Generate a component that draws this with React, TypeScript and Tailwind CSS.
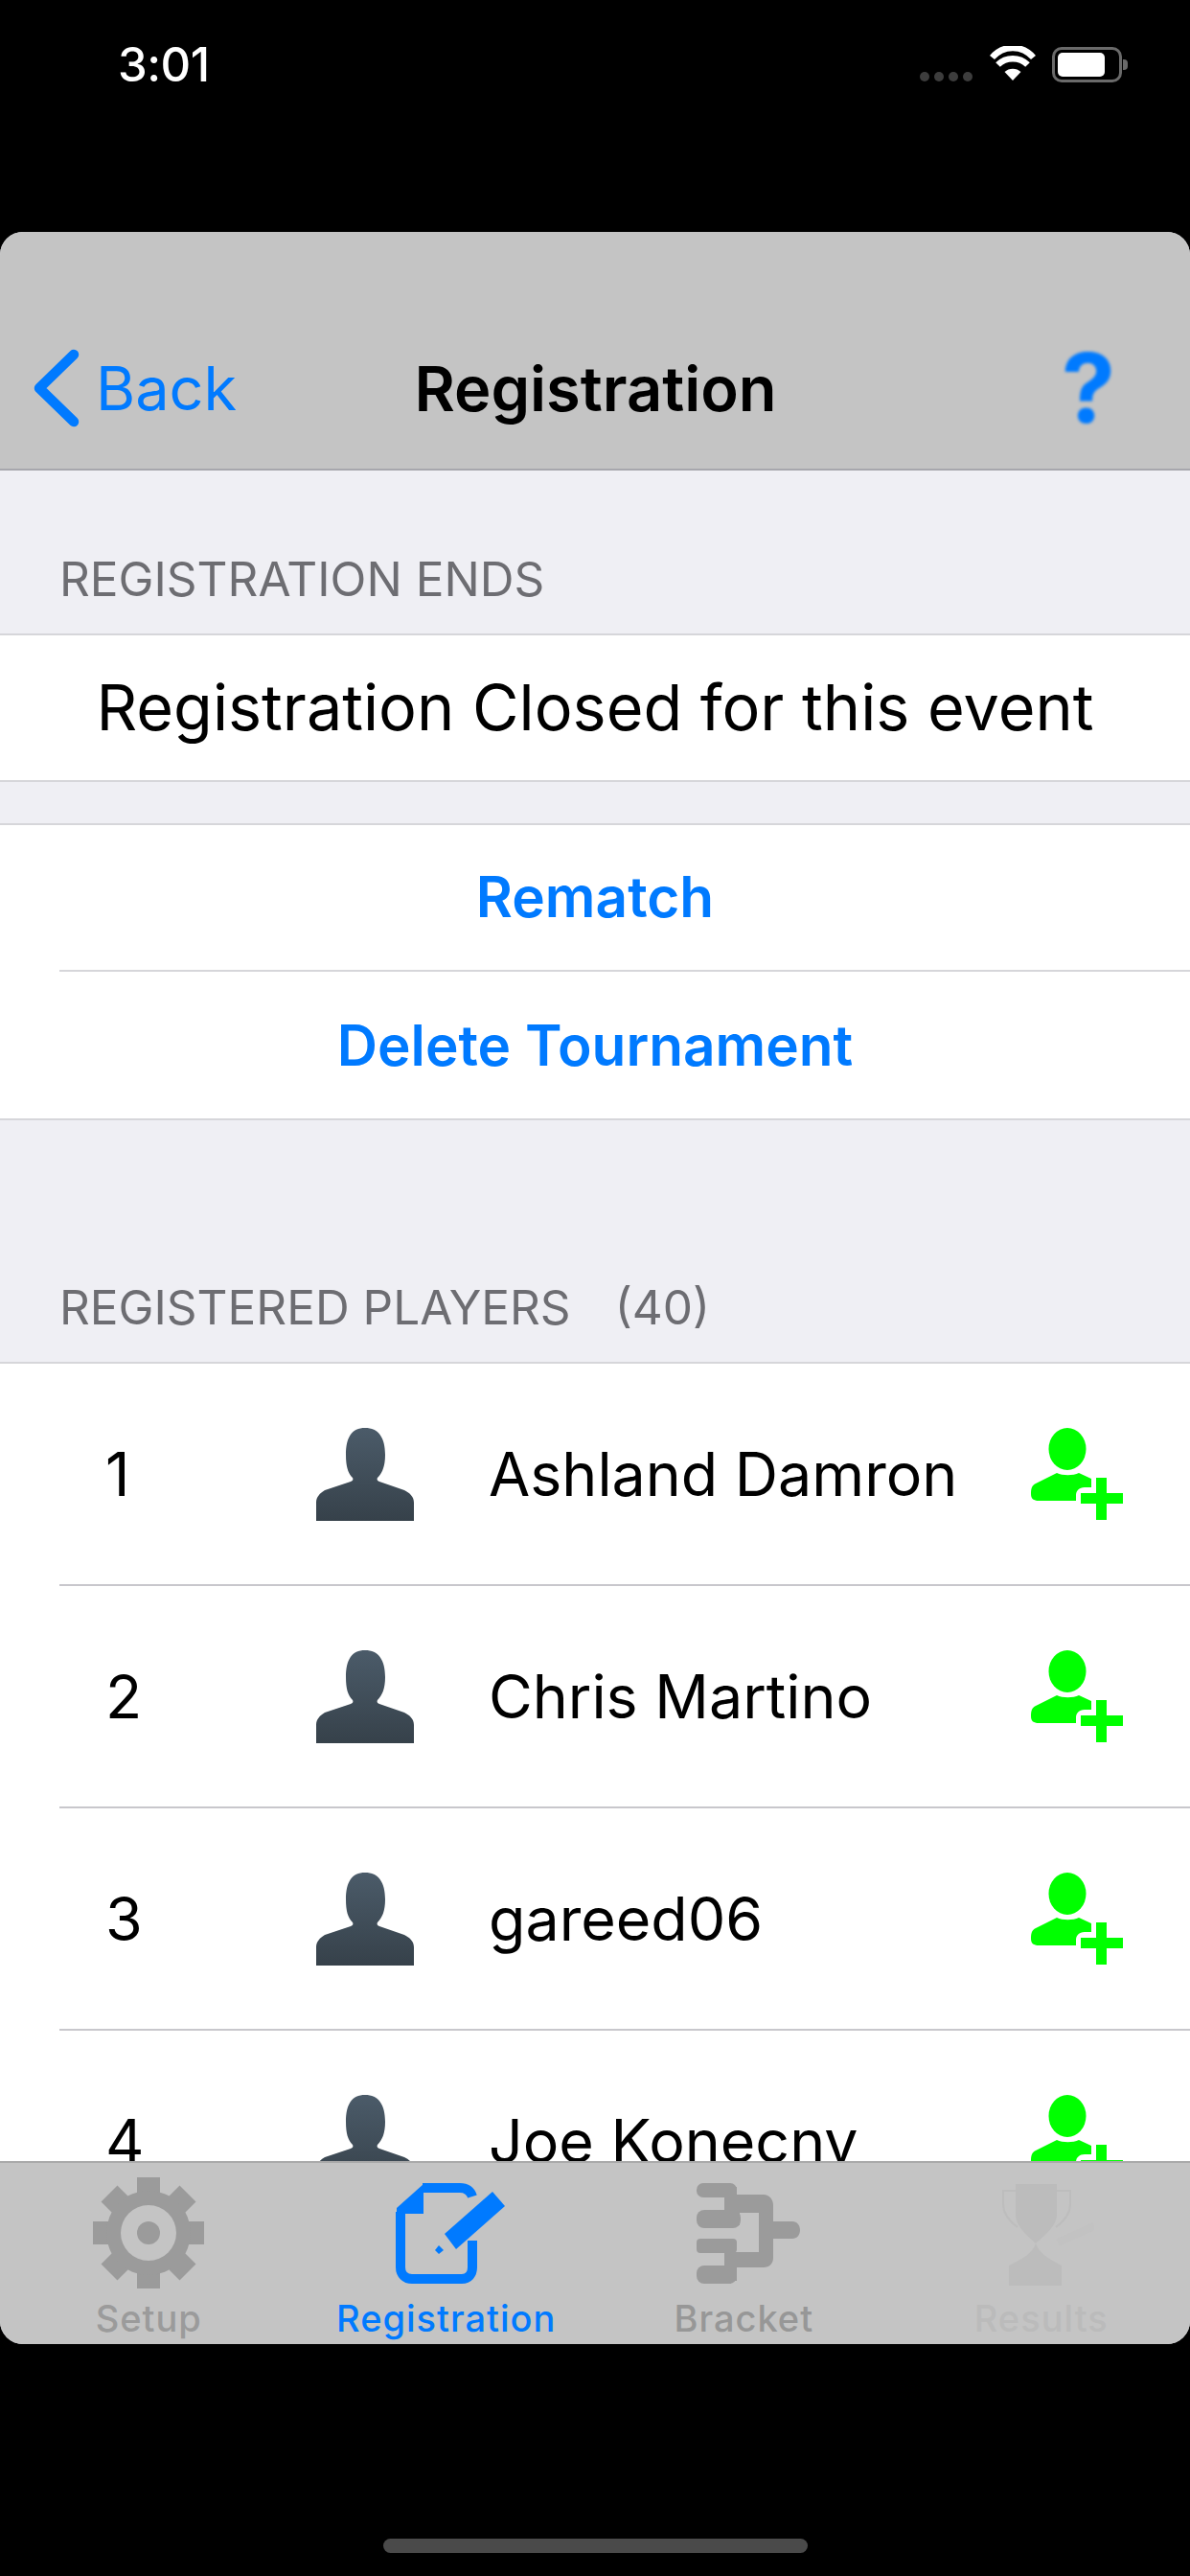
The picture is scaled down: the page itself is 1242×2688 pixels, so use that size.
import React from 'react';

const players = ['Ashland Damron', 'Chris Martino', 'gareed06', 'Joe Konecny'];

const WifiIcon = () => (
  <svg width="48" height="36" viewBox="0 0 48 36" className="mt-[-1px]">
    <path d="M24 36 L15.5 27 C20 22.5 28 22.5 32.5 27 Z" fill="#fff" />
    <path d="M8.5 19.5 C17 11 31 11 39.5 19.5" fill="none" stroke="#fff" strokeWidth="6.5" />
    <path d="M2.5 12 C14 -1.5 34 -1.5 45.5 12" fill="none" stroke="#fff" strokeWidth="6.5" />
  </svg>
);

const BatteryIcon = () => (
  <div className="flex items-center">
    <div className="w-[73px] h-[37px] rounded-[10px] border-[3px] border-[#6a6a6a] p-[3px]">
      <div className="w-[49px] h-full rounded-[5px] bg-white" />
    </div>
    <div className="w-[5px] h-[11px] ml-[1px] rounded-r-[4px] bg-[#6a6a6a]" />
  </div>
);

const PersonIcon = ({ id }: { id: string }) => (
  <svg width="102" height="97" viewBox="0 0 102 97" className="shrink-0">
    <defs>
      <linearGradient id={id} x1="0" y1="0" x2="0" y2="1">
        <stop offset="0" stopColor="#4b5b69" />
        <stop offset="1" stopColor="#36414a" />
      </linearGradient>
    </defs>
    <path
      d="M0 97V78C0 72 4 68 9 65L36 56C38 55 39 54 38 52C33 47 31 40 31 28C31 10 37 0 51 0C65 0 72 10 72 28C72 40 69 47 64 52C63 54 64 55 66 56L92 65C98 68 102 72 102 78V97Z"
      fill={`url(#${id})`}
    />
  </svg>
);

const AddPersonIcon = () => (
  <svg width="96" height="96" viewBox="0 0 96 96" className="shrink-0" fill="#00ff00">
    <ellipse cx="38" cy="22" rx="19.5" ry="22" />
    <path d="M27 47C33 50 44 50 50 47L63 53V62H56C50 62 47 66 47 70V76H8C3 76 0 74 0 69C0 63 1 60 5 58Z" />
    <rect x="68" y="52" width="11" height="44" />
    <rect x="52" y="68" width="44" height="11" />
  </svg>
);

const GearIcon = () => (
  <svg width="116" height="116" viewBox="0 0 116 116">
    <g fill="#9b9b9b">
      {[0, 45, 90, 135].map((deg) => (
        <g key={deg} transform={`rotate(${deg} 58 58)`}>
          <rect x="46" y="0" width="24" height="116" />
        </g>
      ))}
      <circle cx="58" cy="58" r="44" />
    </g>
    <circle cx="58" cy="58" r="29" fill="#c4c4c4" />
    <circle cx="58" cy="58" r="12" fill="#9b9b9b" />
  </svg>
);

const RegistrationIcon = () => (
  <svg width="115" height="105" viewBox="0 0 115 105" className="ml-[8px] blur-[0.6px]">
    <path
      d="M29 5H68C75 5 79 8 81 14M81 60V88C81 95 77 100 70 100H18C11 100 6 95 6 88V30"
      fill="none"
      stroke="#007aff"
      strokeWidth="10"
    />
    <path d="M30 1V32H2V26Z" fill="#007aff" />
    <path d="M102 9L115 24L64 69L52 53Z" fill="#007aff" />
    <path d="M46 65L51 70L46 74L42 70Z" fill="#007aff" />
  </svg>
);

const BracketIcon = () => (
  <svg width="108" height="105" viewBox="0 0 108 105" className="ml-[10px]" fill="#9b9b9b">
    <rect x="0" y="0" width="42" height="15" rx="7" />
    <rect x="0" y="28" width="46" height="19" rx="8" />
    <rect x="0" y="58" width="42" height="15" rx="4" />
    <rect x="0" y="86" width="42" height="19" rx="8" />
    <path d="M29 4H42V12H70C76 12 80 17 80 23V40H100C105 40 108 44 108 49C108 54 105 58 100 58H80V78C80 84 76 88 70 88H42V102H29V72H65V31H45V44H29V28Z" />
  </svg>
);

const TrophyIcon = () => (
  <svg width="98" height="109" viewBox="0 0 98 109" className="ml-[12px]">
    <g fill="#bcbcbc">
      <path d="M16 3H59V35C59 48 42 60 37 65C32 60 16 48 16 35Z" />
      <path d="M37 65C40 74 48 80 64 88V109H9V88C26 80 34 74 37 65Z" />
    </g>
    <path
      d="M16 10H3V24C3 34 10 42 18 48M59 10H73V24C73 34 66 42 58 48"
      fill="none"
      stroke="#bdbdbd"
      strokeWidth="2"
    />
    <path d="M60 64L98 47" stroke="#c2c2c2" strokeWidth="8" />
  </svg>
);

const tabs = [
  { label: 'Setup', icon: GearIcon, color: 'text-[#9b9b9b]' },
  { label: 'Registration', icon: RegistrationIcon, color: 'text-[#007aff]' },
  { label: 'Bracket', icon: BracketIcon, color: 'text-[#979797]' },
  { label: 'Results', icon: TrophyIcon, color: 'text-[#bbbbbb]' },
];

export default function App() {
  return (
    <div className="w-[1242px] h-[2688px] bg-black flex flex-col overflow-hidden font-[Inter,sans-serif] text-black">
      {/* status bar */}
      <div className="h-[242px] shrink-0 flex items-start justify-between pl-[123px] pr-[65px] pt-[49px]">
        <span className="text-white text-[49px] leading-[38px] font-medium tracking-[-0.5px]">3:01</span>
        <div className="flex items-start">
          <div className="flex gap-[5px] mt-[26px] mr-[18px]">
            {[0, 1, 2, 3].map((i) => (
              <div key={i} className="w-[10px] h-[10px] rounded-full bg-[#3d3d3d]" />
            ))}
          </div>
          <WifiIcon />
          <div className="ml-[17px]">
            <BatteryIcon />
          </div>
        </div>
      </div>

      {/* app card */}
      <div className="h-[2204px] shrink-0 flex flex-col rounded-[24px] overflow-hidden bg-[#efeff4]">
        <div className="h-[249px] shrink-0 bg-[#c4c4c4] border-b-2 border-[#a7a7ad] flex items-end pb-[42px] pl-[35px] pr-[78px] relative">
          <div className="flex items-center w-[300px] h-[84px]">
            <svg width="48" height="82" viewBox="0 0 48 82" fill="none">
              <path d="M42 6L6 41L42 76" stroke="#007aff" strokeWidth="10.5" strokeLinecap="round" strokeLinejoin="round" />
            </svg>
            <span className="ml-[17px] text-[63px] leading-none text-[#007aff]">Back</span>
          </div>
          <div className="flex-1 h-[84px] flex items-center justify-center pr-[200px] text-[65px] leading-none font-semibold">
            Registration
          </div>
          <span className="h-[84px] flex items-center text-[100px] leading-none font-bold text-[#007aff] blur-[1.5px]">?</span>
        </div>

        <div className="flex-1 min-h-0 overflow-hidden">
          <div className="h-[170px] flex items-end pb-[36px] pl-[62px] text-[49.5px] leading-[42px] text-[#6d6d72]">
            REGISTRATION ENDS
          </div>
          <div className="h-[155px] bg-white border-y-2 border-[#d6d6da] flex items-center justify-center text-[66.5px] leading-none">
            Registration Closed for this event
          </div>

          <div className="mt-[43px] bg-white border-y-2 border-[#d6d6da]">
            <div className="ml-[62px] h-[153px] border-b-2 border-[#d6d6da] flex items-center justify-center pr-[62px] text-[58.5px] leading-none font-semibold text-[#007aff]">
              Rematch
            </div>
            <div className="h-[153px] pt-[2px] flex items-center justify-center text-[58.5px] leading-none font-semibold text-[#007aff]">
              Delete Tournament
            </div>
          </div>

          <div className="h-[252px] flex items-end pb-[36px] pl-[62px] text-[49.5px] leading-[42px] text-[#6d6d72]">
            <span>REGISTERED PLAYERS</span>
            <span className="ml-[46px]">(40)</span>
          </div>

          <div className="bg-white border-t-2 border-[#d6d6da]">
            {players.map((name, i) => (
              <div key={name} className="ml-[62px] h-[232px] border-b-2 border-[#c8c7cc] flex items-center text-[62.7px] leading-none">
                <span className="w-[268px] pl-[48px]">{i + 1}</span>
                <PersonIcon id={`person-${i}`} />
                <span className="ml-[78px] flex-1">{name}</span>
                <span className="mr-[70px]">
                  <AddPersonIcon />
                </span>
              </div>
            ))}
          </div>
        </div>

        {/* tab bar */}
        <div className="h-[191px] shrink-0 bg-[#c4c4c4] border-t-2 border-[#a9a9a9] flex">
          {tabs.map((tab) => (
            <div key={tab.label} className="flex-1 flex flex-col items-center pt-[15px]">
              <div className="h-[116px] flex items-center justify-center">
                <tab.icon />
              </div>
              <span className={`mt-[12px] text-[38px] leading-[38px] tracking-[1px] font-medium ${tab.color}`}>{tab.label}</span>
            </div>
          ))}
        </div>
      </div>

      {/* home indicator */}
      <div className="flex-1 flex justify-center pt-[203px]">
        <div className="w-[443px] h-[15px] rounded-full bg-[#4a4a4a]" />
      </div>
    </div>
  );
}
